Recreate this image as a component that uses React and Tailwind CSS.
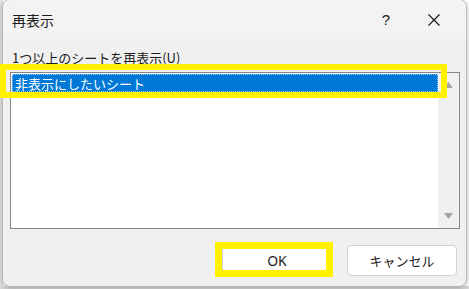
import React from "react";

const jp = { fontFamily: '"Noto Sans CJK JP", "Noto Sans", sans-serif' };

export default function App() {
  return (
    <div className="relative w-[469px] h-[289px] overflow-hidden bg-white" style={jp}>
      {/* spreadsheet behind, hinted by grid */}
      <div className="absolute left-0 top-0 w-[3px] h-[289px] bg-[#e4e4e4]" />
      <div className="absolute left-0 bottom-0 w-[469px] h-[3px] bg-[#dcdcdc]" />

      {/* dialog */}
      <div className="absolute left-[2px] top-[-1px] w-[465px] h-[288px] rounded-[8px] border border-[#b9b9b9] bg-[#f0f0f0] shadow-[0_2px_6px_rgba(0,0,0,0.25)] flex flex-col overflow-hidden">
        {/* title bar */}
        <div className="h-[39px] shrink-0 flex items-center bg-[#f3f3f3] text-[#1b1b1b]">
          <span className="pl-[9px] text-[14px] leading-none">再表示</span>
          <span className="ml-auto mr-[36px] text-[15px] leading-none" style={{ fontFamily: '"Liberation Sans", sans-serif' }}>?</span>
          <svg width="16" height="16" viewBox="0 0 16 16" className="mr-[24px]">
            <path d="M2.5 2.5 L13.5 13.5 M13.5 2.5 L2.5 13.5" stroke="#1b1b1b" strokeWidth="1.2" fill="none" />
          </svg>
        </div>

        {/* label */}
        <div className="pl-[9px] mt-[9px] h-[18px] flex items-center text-[13px] leading-none text-[#1b1b1b]">
          1つ以上のシートを再表示(U)
        </div>

        {/* listbox */}
        <div className="ml-[7px] mr-[6px] mt-[6px] h-[157px] border border-[#828790] bg-white flex">
          <div className="flex-1 pt-[1px] pl-[1px]">
            <div className="h-[18px] bg-[#0078d7] border border-dotted border-[#9cc9f0] flex items-center pl-[2px] text-white text-[13px] leading-none">
              非表示にしたいシート
            </div>
          </div>
          <div className="w-[21px] bg-[#f0f0f0] flex flex-col items-center justify-between py-[9px]">
            <svg width="9" height="6" viewBox="0 0 9 6"><path d="M4.5 0 L9 6 L0 6 Z" fill="#a3a3a3" /></svg>
            <svg width="9" height="6" viewBox="0 0 9 6"><path d="M0 0 L9 0 L4.5 6 Z" fill="#a3a3a3" /></svg>
          </div>
        </div>

        {/* buttons */}
        <div className="mt-[16px] pr-[9px] flex justify-end gap-[15px]">
          <button className="w-[110px] h-[31px] rounded-[4px] border border-[#d0d0d0] bg-white text-[14px] text-[#1b1b1b]" style={{ fontFamily: '"Noto Sans", "Noto Sans CJK JP", sans-serif' }}>
            OK
          </button>
          <button className="w-[110px] h-[31px] rounded-[4px] border border-[#d0d0d0] bg-white text-[13px] text-[#1b1b1b]">
            キャンセル
          </button>
        </div>
      </div>

      {/* yellow annotation highlights */}
      <div className="absolute left-0 top-[64px] w-[447px] h-[34px] border-[6px] border-[#fff100]" />
      <div className="absolute left-[215px] top-[242px] w-[118px] h-[35px] border-[7px] border-[#fff100]" />
    </div>
  );
}
